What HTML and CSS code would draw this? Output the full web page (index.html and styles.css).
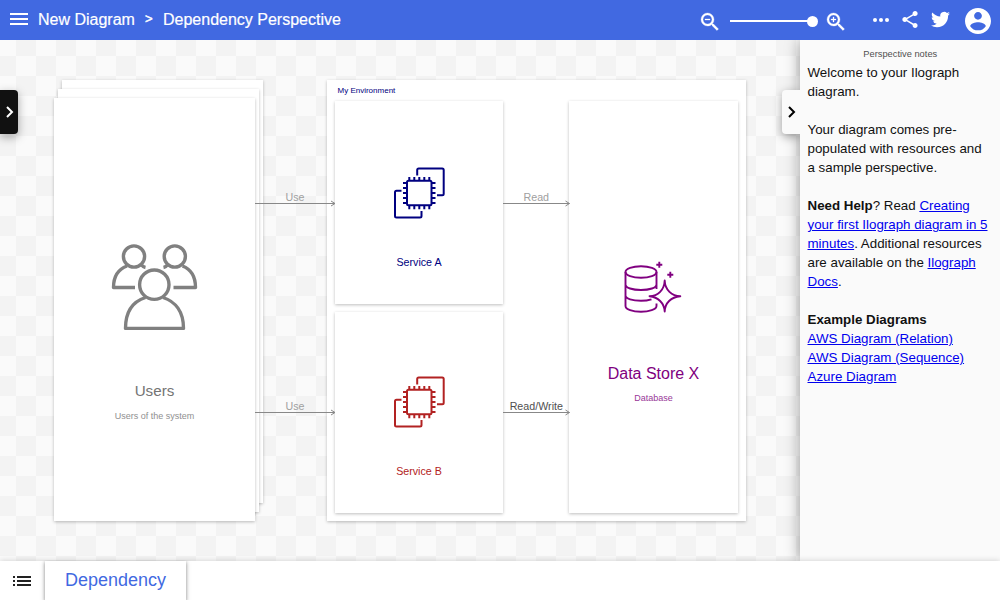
FILE: index.html
```html
<!DOCTYPE html>
<html lang="en">
<head>
<meta charset="utf-8">
<title>New Diagram</title>
<link rel="stylesheet" href="styles.css">
</head>
<body>
<div class="app">
  <header class="topbar">
    <svg class="menu" viewBox="0 0 18 12"><path d="M0 0h18v2H0zM0 5h18v2H0zM0 10h18v2H0z"/></svg>
    <span class="crumb name">New Diagram</span>
    <span class="sep">&gt;</span>
    <span class="crumb persp">Dependency Perspective</span>
    <div class="tools">
      <svg class="icon zoom-out" viewBox="0 0 24 24"><path d="M15.5 14h-.79l-.28-.27A6.47 6.47 0 0 0 16 9.5 6.5 6.5 0 1 0 9.5 16c1.61 0 3.09-.59 4.23-1.57l.27.28v.79l5 4.99L20.49 19l-4.99-5zm-6 0C7.01 14 5 11.99 5 9.5S7.01 5 9.5 5 14 7.01 14 9.5 11.99 14 9.5 14zM7 9h5v1H7z"/></svg>
      <div class="slider"><i class="knob"></i></div>
      <svg class="icon zoom-in" viewBox="0 0 24 24"><path d="M15.5 14h-.79l-.28-.27A6.47 6.47 0 0 0 16 9.5 6.5 6.5 0 1 0 9.5 16c1.61 0 3.09-.59 4.23-1.57l.27.28v.79l5 4.99L20.49 19l-4.99-5zm-6 0C7.01 14 5 11.99 5 9.5S7.01 5 9.5 5 14 7.01 14 9.5 11.99 14 9.5 14zm2.500-4h-2v2H9v-2H7V9h2V7h1v2h2z"/></svg>
      <svg class="dots" viewBox="0 0 16 4"><circle cx="2" cy="2" r="2"/><circle cx="8" cy="2" r="2"/><circle cx="14" cy="2" r="2"/></svg>
      <svg class="share" viewBox="3 2 18 20"><path d="M18 16.080c-.76 0-1.440.3-1.960.77L8.910 12.700c.05-.23.09-.46.09-.7s-.04-.47-.09-.7l7.050-4.110c.54.5 1.250.81 2.040.81 1.660 0 3-1.340 3-3s-1.340-3-3-3-3 1.340-3 3c0 .24.04.47.09.7L8.040 9.810C7.500 9.310 6.790 9 6 9c-1.660 0-3 1.340-3 3s1.340 3 3 3c.79 0 1.500-.31 2.040-.81l7.120 4.160c-.05.21-.08.43-.08.65 0 1.610 1.310 2.920 2.920 2.920s2.920-1.310 2.920-2.920-1.310-2.920-2.920-2.920z"/></svg>
      <svg class="bird" viewBox="0 0 24 24"><path d="M23.950 4.570a10 10 0 0 1-2.820.77 4.960 4.960 0 0 0 2.160-2.720c-.95.55-2 .95-3.130 1.180a4.920 4.920 0 0 0-8.380 4.480C7.690 8.090 4.070 6.130 1.640 3.160a4.820 4.820 0 0 0-.67 2.480c0 1.710.87 3.210 2.190 4.100a4.900 4.900 0 0 1-2.230-.62v.06a4.920 4.920 0 0 0 3.950 4.830 5 5 0 0 1-2.210.08 4.940 4.940 0 0 0 4.600 3.420A9.870 9.870 0 0 1 0 19.540a13.990 13.990 0 0 0 7.560 2.210c9.050 0 14-7.500 14-13.980 0-.21 0-.42-.02-.63a9.940 9.940 0 0 0 2.410-2.570z"/></svg>
      <svg class="avatar" viewBox="2 2 20 20"><path d="M12 2C6.480 2 2 6.480 2 12s4.480 10 10 10 10-4.480 10-10S17.520 2 12 2zm0 3c1.660 0 3 1.340 3 3s-1.340 3-3 3-3-1.340-3-3 1.340-3 3-3zm0 14.200a7.200 7.200 0 0 1-6-3.220c.03-1.990 4-3.080 6-3.080 1.990 0 5.970 1.090 6 3.080a7.200 7.200 0 0 1-6 3.220z"/></svg>
    </div>
  </header>

  <main class="workspace">
    <section class="canvas">
      <div class="card users third"></div>
      <div class="card users second"></div>
      <div class="card users first">
        <svg class="users-icon" viewBox="111 244 87 88"><circle cx="134" cy="256.500" r="10.600"/><circle cx="174.800" cy="256.500" r="10.600"/><path d="M135 287.500h-21.500c0-10 4-18 13.500-21.500M141 264.500q2 2.500 4.500 3M173.500 287.500H195.500c0-10-4-18-13-21.500M168 264.500q-2 2.500-4.500 3"/><circle cx="154.300" cy="284.700" r="14.700"/><path d="M145.500 297.500C133 301.500 125.500 312 125.500 328.400h58C183.500 312 175.500 301.500 163 297.500"/></svg>
        <span class="title">Users</span>
        <span class="sub">Users of the system</span>
      </div>
      <div class="card env"><span class="env-name">My Environment</span></div>
      <div class="card service a">
        <svg class="chip" viewBox="393 166 53 53"><use href="#chip-shape"/></svg>
        <span class="label">Service A</span>
      </div>
      <div class="card service b">
        <svg class="chip" viewBox="393 166 53 53"><g id="chip-shape"><rect x="407" y="180.800" width="24.500" height="24.500" rx="1.500"/><path d="M409.300 177v4M414.300 177v4M419.300 177v4M424.300 177v4M429.300 177v4M409.300 205v4.200M414.300 205v4.200M419.300 205v4.200M424.300 205v4.200M429.300 205v4.200M403 183h4M403 188h4M403 193h4M403 198h4M403 203h4M431.500 183h4M431.500 188h4M431.500 193h4M431.500 198h4M431.500 203h4"/><path d="M417.200 175.500v-5.500q0-1.500 1.500-1.500H442.200q1.500 0 1.500 1.500V193.700q0 1.500-1.500 1.500H437M401.500 190.700h-5q-1.500 0-1.500 1.500V216q0 1.500 1.500 1.500h23.500q1.500 0 1.500-1.500V211"/></g></svg>
        <span class="label">Service B</span>
      </div>
      <div class="card store">
        <svg class="db" viewBox="623 261 60 53"><ellipse cx="641" cy="272" rx="15.500" ry="5.700"/><path d="M625.500 272v34c0 3.500 7 5.800 15.500 5.800 8 0 15.500-2.300 15.500-5.800v-2.500M656.500 272v17M625.500 284.500c0 3.300 7 5.500 15.500 5.500s15.500-2.200 15.500-5.500M625.500 295.500c0 3.300 7 5.300 15.500 5.300 4 0 7-.4 10.500-1.500"/><path d="M664.700 280.500C664.900 290 672 296 680.300 296.200 671 297 664.900 303 664.700 311.500 664.300 303 658 297 649.500 296.200 658 296 664.300 290 664.700 280.500z"/><path d="M659.300 261.700v6M656.300 264.700h6M670.300 271.700v6M667.300 274.700h6"/></svg>
        <span class="title">Data Store X</span>
        <span class="sub">Database</span>
      </div>
      <svg class="arrows" viewBox="0 40 800 521"><path d="M255 203.500h80M331 201l4 2.500-4 2.500M255 412.500h80M331 410l4 2.500-4 2.500M503 203.500h66.500M565.500 201l4 2.500-4 2.500M503 412.500h66.500M565.500 410l4 2.500-4 2.500"/><g class="faint"><text x="295" y="201">Use</text><text x="295" y="410">Use</text><text x="536.300" y="201">Read</text></g><text x="536.300" y="410">Read/Write</text></svg>
      <div class="handle left"><svg viewBox="0 0 8 12"><path d="M1 1l5 5-5 5"/></svg></div>
    </section>
    <aside class="notes">
      <div class="handle right"><svg viewBox="0 0 8 12"><path d="M1 1l5 5-5 5"/></svg></div>
      <div class="notes-title">Perspective notes</div>
      <p>Welcome to your Ilograph<br>diagram.</p>
      <p>Your diagram comes pre-<br>populated with resources and<br>a sample perspective.</p>
      <p><b>Need Help</b>? Read <a href="#">Creating<br>your first Ilograph diagram in 5<br>minutes</a>. Additional resources<br>are available on the <a href="#">Ilograph<br>Docs</a>.</p>
      <p><b>Example Diagrams</b><br><a href="#">AWS Diagram (Relation)</a><br><a href="#">AWS Diagram (Sequence)</a><br><a href="#">Azure Diagram</a></p>
    </aside>
  </main>

  <footer class="tabs">
    <svg class="list" viewBox="0 0 18 10"><path d="M0 0h2v2H0zM4 0h14v2H4zM0 4h2v2H0zM4 4h14v2H4zM0 8h2v2H0zM4 8h14v2H4z"/></svg>
    <div class="tab">Dependency</div>
  </footer>
</div>
</body>
</html>
```
FILE: styles.css
```css
* { box-sizing: border-box; }
body { margin: 0; font-family: "Liberation Sans", Arial, sans-serif; }
svg { display: block; flex: none; }
.app { width: 1000px; height: 600px; display: flex; flex-direction: column; overflow: hidden; background: #fff; }

.topbar { height: 40px; flex: none; display: flex; align-items: center; padding: 0 9px 0 10px; background: #4169e1; color: #fff; fill: #fff; white-space: nowrap; }
.menu { width: 18px; height: 12px; margin: 0 10px 2px 0; }
.crumb { font-size: 16px; line-height: 20px; -webkit-text-stroke: .2px currentColor; }
.name { width: 107px; }
.sep { width: 18px; font-size: 13px; line-height: 18px; padding-bottom: 2px; -webkit-text-stroke: .5px currentColor; }
.tools { margin-left: auto; display: flex; align-items: center; }
.icon { width: 24px; height: 24px; margin-top: 3px; stroke: #fff; stroke-width: .3; }
.slider { width: 83px; height: 2px; margin: 2px 11px 0 8px; background: #fff; position: relative; }
.knob { position: absolute; right: -5px; top: -4px; width: 11px; height: 11px; border-radius: 50%; background: #fff; }
.dots { width: 16px; height: 4px; margin-left: 25px; }
.share { width: 16px; height: 17px; margin: 0 0 1px 13px; }
.bird { width: 19px; height: 19px; margin: 0 1px 1px 13px; }
.avatar { width: 26px; height: 26px; margin: 2px 0 0 14px; }

.workspace { height: 521px; flex: none; display: flex; }
.canvas {
  width: 800px; flex: none; position: relative; overflow: hidden;
  background: conic-gradient(#fafafa 25%, #f3f3f3 0 50%, #fafafa 0 75%, #f3f3f3 0) 16px -4px / 40px 40px;
}
.card { position: absolute; background: #fff; box-shadow: 0 1px 3px rgba(0, 0, 0, .26); display: flex; flex-direction: column; align-items: center; white-space: nowrap; }
.users { width: 201px; height: 423px; color: #747474; }
.third { left: 62px; top: 40px; }
.second { left: 58px; top: 49px; }
.first { left: 54px; top: 58px; padding-top: 146px; }
.users-icon { width: 87px; height: 88px; fill: none; stroke: #808080; stroke-width: 3.4; stroke-linejoin: round; }
.title { font-size: 16px; line-height: 18px; }
.first .title { margin-top: 50px; font-size: 15.200px; }
.sub { font-size: 9px; line-height: 12px; opacity: .8; }
.first .sub { margin-top: 10px; }
.env { left: 327px; top: 40px; width: 419px; height: 441px; color: navy; }
.env-name { align-self: flex-start; margin: 6px 0 0 10.500px; font-size: 8px; line-height: 10px; }
.service { left: 335px; width: 168px; padding-top: 65px; }
.a { top: 61px; height: 203px; color: navy; }
.b { top: 272px; height: 201px; padding-top: 63px; color: #b22222; }
.chip { width: 53px; height: 53px; margin-left: 1px; fill: none; stroke: currentColor; stroke-width: 2; }
.label { margin-top: 36px; font-size: 10.700px; line-height: 14px; }
.store { left: 569px; top: 61px; width: 169px; height: 412px; padding-top: 160px; color: purple; }
.db { width: 60px; height: 53px; margin-right: 2px; align-self: center; fill: none; stroke: purple; stroke-width: 1.900; stroke-linejoin: round; }
.store .title { margin-top: 51px; }
.store .sub { margin-top: 9px; }
.arrows { position: absolute; left: 0; top: 0; width: 800px; height: 521px; fill: none; stroke: #888; stroke-width: 1; }
.arrows text { fill: #505050; stroke: none; font-size: 10.700px; text-anchor: middle; }
.arrows .faint text { fill: #a0a0a0; }

.handle { position: absolute; top: 50px; width: 18px; height: 44px; display: flex; align-items: center; justify-content: center; box-shadow: 0 3px 10px rgba(0, 0, 0, .35); }
.handle svg { width: 8px; height: 12px; margin-left: 1px; fill: none; stroke: currentColor; stroke-width: 2; }
.handle.left { left: 0; background: #111; color: #fff; border-radius: 0 4px 4px 0; }
.handle.right { left: -18px; background: #fafafa; color: #000; border-radius: 4px 0 0 4px; clip-path: inset(-20px 0 -20px -20px); }

.notes { position: relative; width: 200px; flex: none; padding: 8px 0 0 7.500px; background: #fafafa; color: #111; box-shadow: 0 0 14px rgba(0, 0, 0, .4); clip-path: inset(0 0 0 -30px); font-size: 13.333px; line-height: 19px; white-space: nowrap; }
.notes-title { padding-right: 7px; text-align: center; font-size: 9.300px; line-height: 12px; color: #505050; margin-bottom: 3px; }
.notes p { margin: 0 0 19px; }
.notes a { color: #0000ee; }

.tabs { height: 39px; flex: none; position: relative; display: flex; align-items: center; background: #fff; box-shadow: 0 0 6px rgba(0, 0, 0, .18); }
.list { width: 18px; height: 10px; margin: 0 14px 0 13px; fill: #222; }
.tab { width: 141px; height: 40px; text-align: center; font-size: 18px; line-height: 39px; color: #4169e1; background: #fff; box-shadow: 0 1px 4px rgba(0, 0, 0, .5); clip-path: inset(0 -6px); }
```
